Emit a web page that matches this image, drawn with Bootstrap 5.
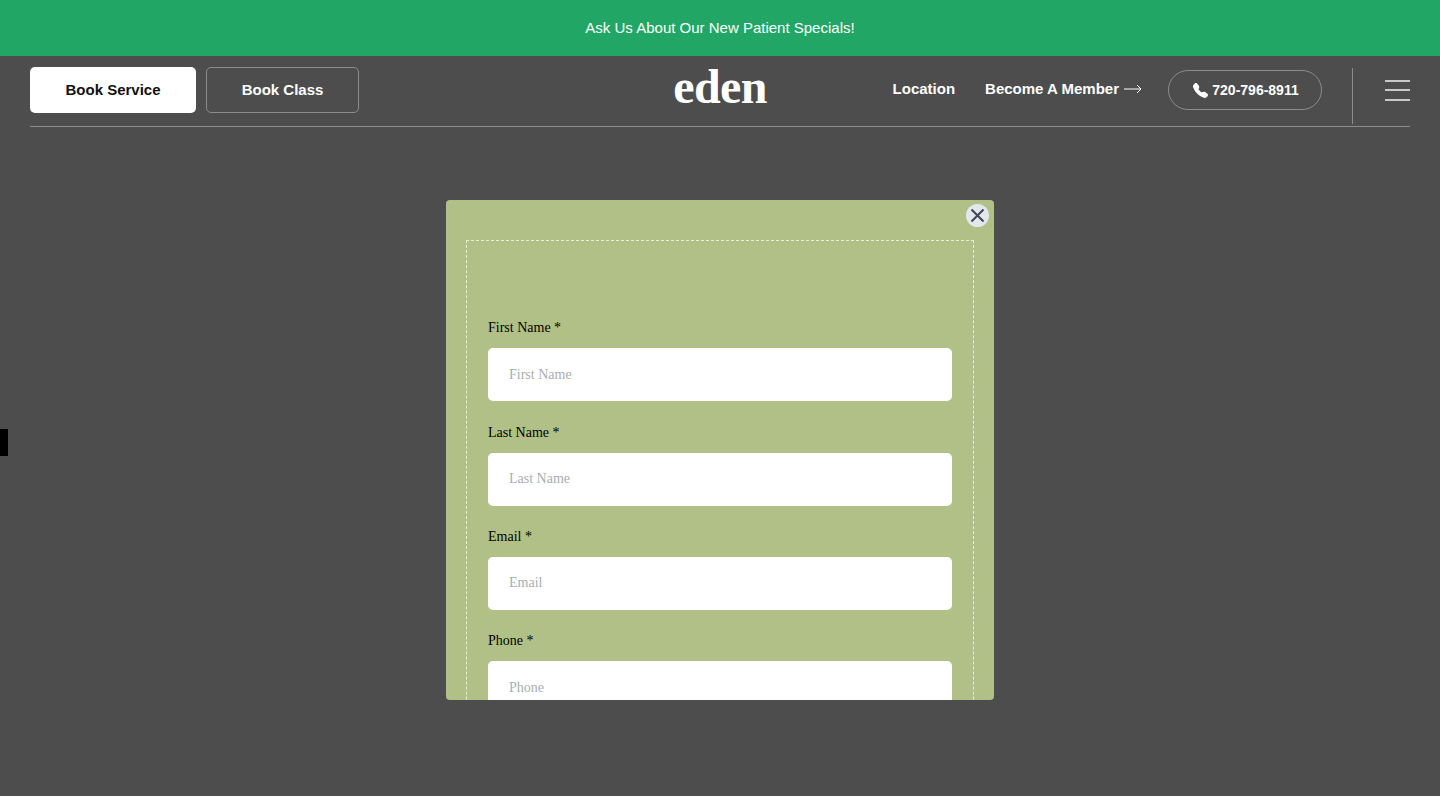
<!DOCTYPE html>
<html lang="en">
<head>
  <meta charset="UTF-8" />
  <meta name="viewport" content="width=device-width, initial-scale=1" />
  <title>Eden</title>
  <link href="https://cdn.jsdelivr.net/npm/bootstrap@5.3.0/dist/css/bootstrap.min.css" rel="stylesheet" />
  <style>
    html, body { height: 810px; overflow: hidden; background: #fff; }
    body { font-family: "Liberation Sans", Arial, sans-serif; }
    .page-shade { height: 796px; background: #4d4d4d; position: relative; }
    .promo-bar { height: 56px; padding-top: 1px; background: #21a665; color: #fff; font-size: 15px; }
    .site-head { height: 71px; margin: 0 30px; padding-bottom: 2px; border-bottom: 1px solid #8c8c8c; }
    .head-side { flex: 1 1 0; }
    .btn-book { height: 46px; font-size: 15px; font-weight: 700; border-radius: 5px; padding: 0; display: flex; align-items: center; justify-content: center; }
    .btn-service { width: 166px; background: #fff; color: #111; border: 0; }
    .btn-class { width: 153px; background: transparent; color: #fff; border: 1px solid #8c8c8c; }
    .book-gap { gap: 10px; }
    .eden-logo { font-family: "Liberation Serif", serif; font-weight: 700; font-size: 48px; line-height: 1; color: #fff; letter-spacing: -0.6px; margin-top: -6px; }
    .head-link { color: #fff; font-size: 15px; font-weight: 700; text-decoration: none; margin-top: -2px; }
    .location-link { margin-right: 30px; }
    .phone-pill { width: 154px; height: 40px; margin-left: 26px; padding-left: 2px; border: 1px solid #8c8c8c; border-radius: 20px; color: #fff; font-size: 14px; font-weight: 700; text-decoration: none; }
    .head-rule { width: 1px; height: 56px; background: #8c8c8c; margin: 12px 32px 0 30px; }
    .burger { width: 25px; height: 21px; }
    .burger span { display: block; height: 2px; background: #c9c9c9; }
    .side-tab { position: absolute; left: 0; top: 429px; width: 8px; height: 27px; background: #000; }
    .popup-wrap { padding-top: 73px; }
    .popup-box { width: 548px; height: 500px; background: #b1c086; border-radius: 4px; padding: 40px 20px 0; position: relative; overflow: hidden; }
    .popup-close { position: absolute; top: 4px; right: 5px; width: 23px; height: 23px; border-radius: 50%; background: #e4e7ec; border: 0; padding: 0; }
    .dash-frame { border: 1px dashed #e9eedb; padding: 77.2px 21px 0; height: 560px; }
    .popup-label { display: block; font-family: "Liberation Serif", serif; font-size: 14px; line-height: 20px; color: #000; margin-bottom: 10px; }
    .popup-field { height: 53px; border: 0; border-radius: 5px; padding: 0 21px; font-family: "Liberation Serif", serif; font-size: 14px; margin-bottom: 21.4px; }
    .popup-field::placeholder { color: #a9adb3; opacity: 1; }
  </style>
</head>
<body>
<div class="page-shade">
  <div class="promo-bar d-flex align-items-center justify-content-center">Ask Us About Our New Patient Specials!</div>

  <header class="site-head d-flex align-items-center">
    <div class="head-side d-flex book-gap">
      <a href="#" class="btn btn-book btn-service">Book Service</a>
      <a href="#" class="btn btn-book btn-class">Book Class</a>
    </div>
    <div class="eden-logo">eden</div>
    <div class="head-side d-flex align-items-center justify-content-end">
      <a href="#" class="head-link location-link">Location</a>
      <a href="#" class="head-link d-flex align-items-center gap-1">Become A Member
        <svg width="19" height="10" viewBox="0 0 19 10" fill="none" stroke="#fff" stroke-width="1"><path d="M1 5h17M14 1l4 4-4 4"/></svg>
      </a>
      <a href="#" class="phone-pill d-flex align-items-center justify-content-center gap-1">
        <svg width="15" height="15" viewBox="0 0 16 16" fill="#fff"><path d="M1.885.511a1.745 1.745 0 0 1 2.61.163L6.29 2.98c.329.423.445.974.315 1.494l-.547 2.19a.678.678 0 0 0 .178.643l2.457 2.457a.678.678 0 0 0 .644.178l2.189-.547a1.745 1.745 0 0 1 1.494.315l2.306 1.794c.829.645.905 1.87.163 2.611l-1.034 1.034c-.74.74-1.846 1.065-2.877.702a18.634 18.634 0 0 1-7.01-4.42 18.634 18.634 0 0 1-4.42-7.009c-.362-1.03-.037-2.137.703-2.877L1.885.511z"/></svg>
        720-796-8911
      </a>
      <div class="head-rule"></div>
      <div class="burger d-flex flex-column justify-content-between"><span></span><span></span><span></span></div>
    </div>
  </header>

  <div class="side-tab"></div>

  <main class="popup-wrap d-flex justify-content-center">
    <div class="popup-box">
      <button type="button" class="popup-close d-flex align-items-center justify-content-center" aria-label="Close">
        <svg width="15" height="15" viewBox="0 0 15 15" stroke="#3f4656" stroke-width="2" fill="none"><path d="M1.5 1.5l12 12M13.5 1.5l-12 12"/></svg>
      </button>
      <form class="dash-frame">
        <label class="popup-label">First Name *</label>
        <input type="text" class="form-control popup-field" placeholder="First Name">
        <label class="popup-label">Last Name *</label>
        <input type="text" class="form-control popup-field" placeholder="Last Name">
        <label class="popup-label">Email *</label>
        <input type="text" class="form-control popup-field" placeholder="Email">
        <label class="popup-label">Phone *</label>
        <input type="text" class="form-control popup-field" placeholder="Phone">
      </form>
    </div>
  </main>
</div>
<script src="https://cdn.jsdelivr.net/npm/bootstrap@5.3.0/dist/js/bootstrap.bundle.min.js"></script>
</body>
</html>
